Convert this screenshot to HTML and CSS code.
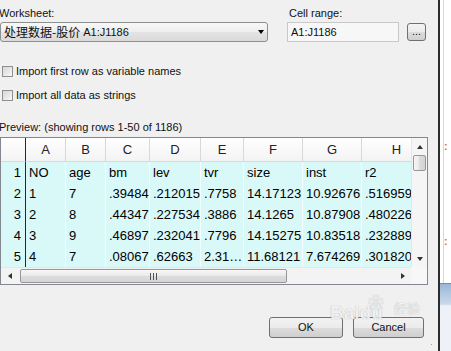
FILE: index.html
```html
<!DOCTYPE html>
<html lang="zh-CN">
    <head>
        <meta charset="UTF-8" />
        <meta name="viewport" content="width=device-width, initial-scale=1.0" />
        <title>Import Excel</title>
        <link rel="stylesheet" href="styles.css">
    </head>
    <body>
        <div class="screen">
            <!-- 대화상자 -->
            <div class="dlg">
                <!-- 상단: 워크시트 / 셀범위 -->
                <div class="top">
                    <div class="ws">
                        <div class="lbl">Worksheet:</div>
                        <div class="combo">
                            <span class="cjk">处理数据-股价</span>
                            <span class="rng">A1:J1186</span>
                            <i class="arr-d"></i>
                        </div>
                    </div>
                    <div class="cr">
                        <div class="lbl">Cell range:</div>
                        <div class="cr-row">
                            <div class="inp">A1:J1186</div>
                            <div class="dots">...</div>
                        </div>
                    </div>
                </div>

                <!-- 체크박스 -->
                <div class="chk"><span class="box"></span>Import first row as variable names</div>
                <div class="chk chk2"><span class="box"></span>Import all data as strings</div>

                <div class="prev">Preview: (showing rows 1-50 of 1186)</div>

                <!-- 미리보기 표 -->
                <div class="grid">
                    <div class="grid-in">
                        <div class="cells">
                            <div class="row hd">
                                <div class="rn"></div>
                                <div>A</div><div>B</div><div>C</div><div>D</div>
                                <div>E</div><div>F</div><div>G</div><div>H</div>
                            </div>
                            <div class="row">
                                <div class="rn">1</div>
                                <div>NO</div><div>age</div><div>bm</div><div>lev</div>
                                <div>tvr</div><div>size</div><div>inst</div><div>r2</div>
                            </div>
                            <div class="row">
                                <div class="rn">2</div>
                                <div>1</div><div>7</div><div>.39484</div><div>.212015</div>
                                <div>.7758</div><div>14.17123</div><div>10.92676</div><div>.5169599</div>
                            </div>
                            <div class="row">
                                <div class="rn">3</div>
                                <div>2</div><div>8</div><div>.44347</div><div>.227534</div>
                                <div>.3886</div><div>14.1265</div><div>10.87908</div><div>.4802264</div>
                            </div>
                            <div class="row">
                                <div class="rn">4</div>
                                <div>3</div><div>9</div><div>.46897</div><div>.232041</div>
                                <div>.7796</div><div>14.15275</div><div>10.83518</div><div>.2328892</div>
                            </div>
                            <div class="row">
                                <div class="rn">5</div>
                                <div>4</div><div>7</div><div>.08067</div><div>.62663</div>
                                <div>2.314526</div><div>11.68121</div><div>7.674269</div><div>.3018203</div>
                            </div>
                        </div>
                        <!-- 세로 스크롤 -->
                        <div class="vbar">
                            <div class="sb-btn"><i class="arr-u"></i></div>
                            <div class="vthumb"></div>
                            <div class="sb-btn dn"><i class="arr-s"></i></div>
                        </div>
                    </div>
                    <!-- 가로 스크롤 -->
                    <div class="hrow">
                        <div class="hbar">
                            <div class="hb-btn"><i class="arr-l"></i></div>
                            <div class="hthumb"><span class="grip-l"></span></div>
                            <div class="hb-btn rt"><i class="arr-r"></i></div>
                        </div>
                        <div class="corner"></div>
                    </div>
                </div>

                <div class="btns">
                    <div class="btn ok">OK</div>
                    <div class="btn cancel">Cancel</div>
                </div>

                <div class="wm"><span class="wm-paw">❀</span><span class="wm-b">Baidu</span><span class="wm-j">经验</span></div>
                <div class="grip"></div>
            </div>
            <div class="edge"></div>
            <!-- 뒤쪽 창 -->
            <div class="side">
                <div class="side-top">
                    <span class="mark">:</span>
                    <span class="mark m2">:</span>
                </div>
                <div class="side-bot"></div>
            </div>
        </div>
    </body>
</html>
```

FILE: styles.css
```css
* {
    box-sizing: border-box;
}
html,
body {
    margin: 0;
}
body {
    width: 451px;
    height: 351px;
    overflow: hidden;
    background: #f0f0f0;
    font-family: "Liberation Sans", Arial, sans-serif;
    font-size: 11px;
    color: #111;
}
.screen {
    display: flex;
    height: 351px;
}
/* 대화상자 */
.dlg {
    position: relative;
    /* 부모자격 */
    flex: none;
    width: 438px;
    padding-top: 6px;
}
.top {
    display: flex;
}
.lbl {
    height: 14px;
    line-height: 14px;
    margin-bottom: 2px;
}
.ws {
    width: 268px;
}
.ws .lbl {
    margin-left: -1px;
}
.combo {
    display: flex;
    align-items: center;
    height: 20px;
    padding-left: 3px;
    border: 1px solid #8e8f8f;
    border-radius: 3px;
    background: linear-gradient(to bottom, #f8f8f8, #eeeeee 50%, #e4e4e4 50%, #dadada);
}
.cjk {
    font-family: "Noto Sans CJK SC", sans-serif;
    font-size: 12px;
    line-height: 18px;
}
.rng {
    margin-left: 3px;
}
.arr-d {
    margin-left: auto;
    margin-right: 3px;
    border-left: 3.5px solid transparent;
    border-right: 3.5px solid transparent;
    border-top: 4px solid #000;
}
.cr {
    margin-left: 19px;
}
.cr .lbl {
    padding-left: 2px;
}
.cr-row {
    display: flex;
}
.inp {
    width: 112px;
    height: 20px;
    line-height: 18px;
    padding-left: 3px;
    border: 1px solid #c9c9c9;
    background: #f7f7f7;
}
.dots {
    width: 19px;
    height: 18px;
    margin: 1px 0 0 8px;
    border: 1px solid #707070;
    border-radius: 3px;
    background: linear-gradient(to bottom, #f4f4f4, #ebebeb 50%, #dddddd 50%, #cfcfcf);
    text-align: center;
    line-height: 14px;
}
/* 체크박스 */
.chk {
    display: flex;
    align-items: center;
    height: 16px;
    margin-top: 21px;
    padding-left: 2px;
}
.chk2 {
    margin-top: 8px;
}
.box {
    width: 11px;
    height: 11px;
    margin-right: 3px;
    border: 1px solid #8e8f8f;
    background: linear-gradient(135deg, #d6d6d6, #f8f8f8);
}
.prev {
    height: 16px;
    line-height: 16px;
    margin: 16px 0 0 -1px;
}
/* 표 */
.grid {
    width: 428px;
    height: 148px;
    margin-top: 2px;
    border: 1px solid #828790;
    background: #f0f0f0;
}
.grid-in {
    display: flex;
    height: 129px;
}
.cells {
    width: 410px;
    overflow: hidden;
    background: #d9f8f8;
    font-size: 13px;
    color: #000;
}
.row {
    display: grid;
    grid-template-columns: 25px 40px 40px 44px 51px 43px 59px 59px 70px;
    height: 21px;
    line-height: 21px;
}
.row > div {
    padding-left: 3px;
    border-right: 1px solid rgba(255, 255, 255, 0.7);
    white-space: nowrap;
    overflow: hidden;
    text-overflow: ellipsis;
}
.row > .rn {
    padding: 0 4px 0 0;
    text-align: right;
    border-right: 1px solid #1d2456;
}
.row:nth-child(n + 2) > div:last-child {
    text-overflow: clip;
}
.hd {
    height: 24px;
    line-height: 23px;
    background: linear-gradient(to bottom, #ffffff, #f3f3f3);
    color: #222;
}
.hd > div {
    padding: 0;
    text-align: center;
    border-right: 1px solid #d9d9d9;
    border-bottom: 1px solid #d9d9d9;
}
.hd > .rn {
    border-bottom: 1px solid #d9d9d9;
}
/* 스크롤바 */
.vbar {
    display: flex;
    flex-direction: column;
    width: 16px;
    background: #f5f5f5;
    border-left: 1px solid #e6e6e6;
}
.sb-btn {
    display: flex;
    align-items: center;
    justify-content: center;
    height: 17px;
}
.sb-btn.dn {
    margin-top: auto;
}
.vthumb {
    height: 16px;
    margin: 0 1px;
    border: 1px solid #979797;
    border-radius: 2px;
    background: linear-gradient(to right, #f7f7f7, #e8e8e8 50%, #dcdcdc 50%, #d3d3d3);
}
.arr-u,
.arr-s {
    border-left: 3.5px solid transparent;
    border-right: 3.5px solid transparent;
}
.arr-u {
    border-bottom: 4px solid #333;
}
.arr-s {
    border-top: 4px solid #333;
}
.arr-l,
.arr-r {
    border-top: 3.5px solid transparent;
    border-bottom: 3.5px solid transparent;
}
.arr-l {
    border-right: 4px solid #333;
}
.arr-r {
    border-left: 4px solid #333;
}
.hrow {
    display: flex;
    height: 17px;
}
.hbar {
    display: flex;
    width: 410px;
    background: #f3f3f3;
    border-top: 1px solid #e6e6e6;
}
.hb-btn {
    display: flex;
    align-items: center;
    justify-content: center;
    width: 17px;
}
.hb-btn.rt {
    margin-left: auto;
}
.hthumb {
    display: flex;
    align-items: center;
    justify-content: center;
    width: 267px;
    margin: 1px 0 1px 2px;
    border: 1px solid #979797;
    border-radius: 2px;
    background: linear-gradient(to bottom, #f8f8f8, #e9e9e9 50%, #dddddd 50%, #d4d4d4);
}
.grip-l {
    width: 7px;
    height: 7px;
    background: linear-gradient(to right, #555 1px, transparent 1px) repeat-x;
    background-size: 3px 7px;
}
.corner {
    flex: 1;
    background: #f7f7f7;
}
/* 버튼 */
.btns {
    display: flex;
    justify-content: flex-end;
    gap: 10px;
    margin-top: 32px;
    padding-right: 14px;
}
.btn {
    height: 21px;
    line-height: 19px;
    text-align: center;
    border: 1px solid #707070;
    border-radius: 3px;
    background: linear-gradient(to bottom, #f2f2f2, #ebebeb 50%, #dddddd 50%, #cfcfcf);
}
.ok {
    width: 74px;
}
.cancel {
    width: 71px;
}
/* 워터마크 */
.wm {
    position: absolute;
    left: 330px;
    top: 290px;
    width: 95px;
    height: 40px;
    color: rgba(255, 255, 255, 0.85);
    text-shadow: 0 0 1px rgba(0, 0, 0, 0.35);
    pointer-events: none;
}
.wm-b {
    position: absolute;
    left: 0;
    top: 12px;
    font-size: 19px;
    font-weight: bold;
}
.wm-paw {
    position: absolute;
    left: 38px;
    top: 0;
    font-size: 16px;
}
.wm-j {
    position: absolute;
    left: 64px;
    top: 8px;
    font-family: "Noto Sans CJK SC", sans-serif;
    font-size: 13px;
}
/* 크기조절 손잡이 */
.grip {
    position: absolute;
    right: 4px;
    bottom: 4px;
    width: 7px;
    height: 7px;
    background: radial-gradient(circle, #a0a0a0 0.8px, transparent 1px);
    background-size: 3px 3px;
    clip-path: polygon(100% 0, 100% 100%, 0 100%);
}
/* 오른쪽 창 */
.edge {
    width: 2px;
    background: #2c2c2c;
}
.side {
    display: flex;
    flex-direction: column;
    flex: 1;
}
.side-top {
    display: flex;
    flex-direction: column;
    height: 283px;
    padding-top: 140px;
    background: linear-gradient(to right, #ffffff 3px, #d8d8d8 3px, #d8d8d8 4px, #ffffff 4px);
}
.mark {
    height: 12px;
    line-height: 12px;
    padding-left: 4px;
    color: #e0701c;
    font-weight: bold;
}
.m2 {
    margin-top: 83px;
}
.side-bot {
    flex: 1;
    border-top: 1px solid #8a8a8a;
    background: linear-gradient(to bottom, #9bb6d8, #c9d9ec 20px, #eef2f8 22px);
}
```
